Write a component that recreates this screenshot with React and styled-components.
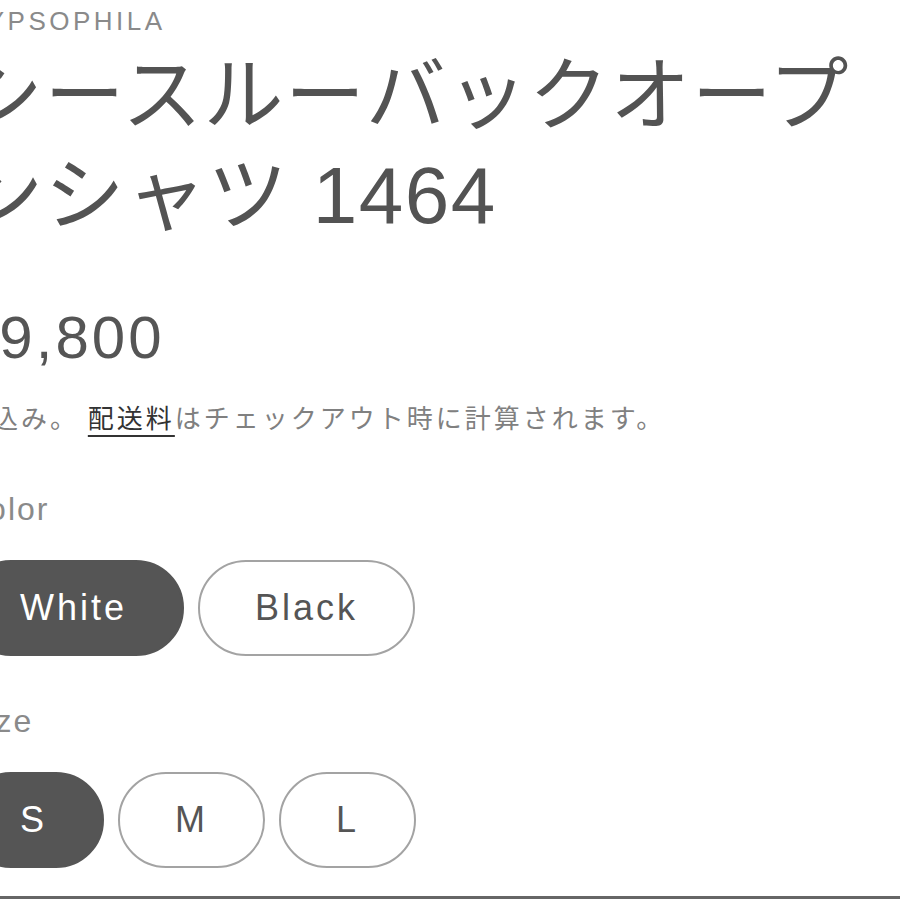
import React from 'react';
import styled, { createGlobalStyle } from "styled-components";

const Global = createGlobalStyle`
    body {
        margin: 0;
        background: #fff;
        overflow: hidden;
    }
`;

const Page = styled("div")`
    margin-left: -37px;
    padding-top: 8px;
    font-family: "Liberation Sans", "Noto Sans CJK JP", sans-serif;
    color: #555;
`;

const Vendor = styled("div")`
    font-size: 26px;
    line-height: 26px;
    letter-spacing: 3.5px;
    color: #8a8a8a;
`;

const Title = styled("h1")`
    margin: 12px 0 0;
    max-width: 910px;
    font-size: 80px;
    line-height: 100px;
    font-weight: 400;
    letter-spacing: 1.5px;
    color: #535353;
`;

const Price = styled("div")`
    margin-top: 62px;
    font-size: 60px;
    line-height: 60px;
    letter-spacing: 3px;
    color: #555;
`;

const TaxNote = styled("div")`
    margin-top: 36px;
    font-family: "Noto Sans CJK JP", sans-serif;
    font-size: 26px;
    line-height: 26px;
    letter-spacing: 3px;
    color: #808080;
`;

const ShippingLink = styled("a")`
    color: #333;
    text-decoration: underline;
    text-decoration-thickness: 2px;
    text-underline-offset: 7px;
`;

const OptionGroup = styled("div")`
    margin-top: ${p => p.$gap}px;
`;

const Label = styled("div")`
    font-size: 32px;
    line-height: 30px;
    letter-spacing: 2px;
    color: #8a8a8a;
`;

const PillRow = styled("div")`
    display: flex;
    gap: 14px;
    margin-top: 36px;
`;

const Pill = styled("button")`
    box-sizing: border-box;
    height: 96px;
    padding: 0 55px;
    border-radius: 48px;
    border: 2px solid ${p => p.$active ? "#555" : "#a3a3a3"};
    background: ${p => p.$active ? "#555" : "#fff"};
    color: ${p => p.$active ? "#fff" : "#555"};
    font-family: "Liberation Sans", sans-serif;
    font-size: 36px;
    letter-spacing: 3px;
    display: flex;
    align-items: center;
    justify-content: center;
`;

const Divider = styled("div")`
    margin-top: 28px;
    height: 3px;
    background: #666;
`;

const options = [
    { name: "Color", values: ["White", "Black"], gap: 64 },
    { name: "Size", values: ["S", "M", "L"], gap: 50 },
];

export default () => (
  <>
    <Global />
    <Page>
        <Vendor>GYPSOPHILA</Vendor>
        <Title>シースルーバックオープンシャツ 1464</Title>
        <Price>¥9,800</Price>
        <TaxNote>
            税込み。 <ShippingLink>配送料</ShippingLink>はチェックアウト時に計算されます。
        </TaxNote>
        {options.map(o => (
            <OptionGroup key={o.name} $gap={o.gap}>
                <Label>{o.name}</Label>
                <PillRow>
                    {o.values.map((v, i) => (
                        <Pill key={v} $active={i === 0}>{v}</Pill>
                    ))}
                </PillRow>
            </OptionGroup>
        ))}
        <Divider />
    </Page>
  </>
)
